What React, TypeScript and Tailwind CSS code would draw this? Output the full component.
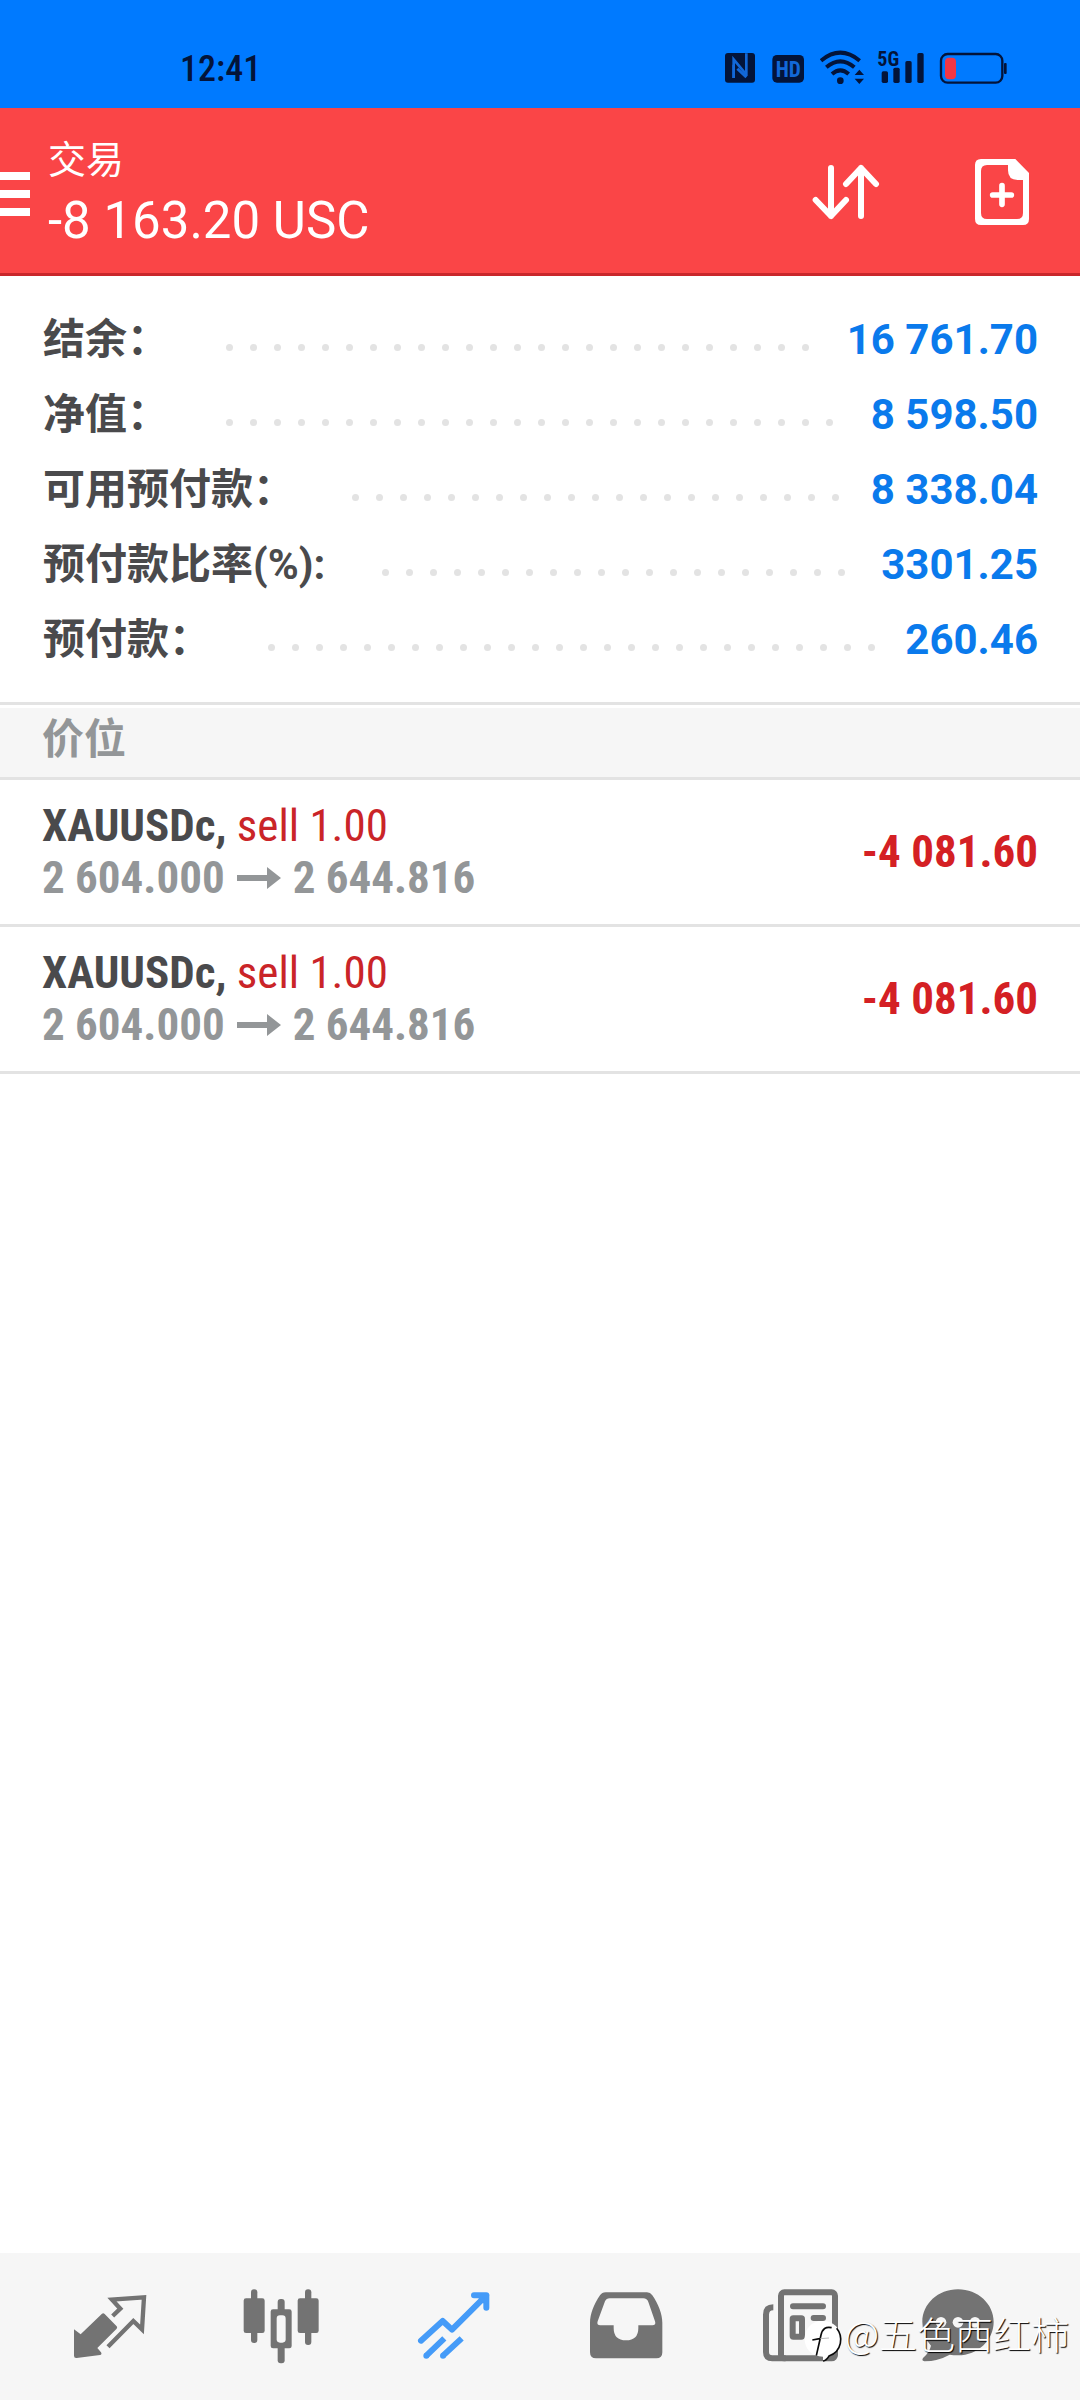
import React from 'react';

const summary = [
  { label: '结余：', value: '16 761.70' },
  { label: '净值：', value: '8 598.50' },
  { label: '可用预付款：', value: '8 338.04' },
  { label: '预付款比率(%):', value: '3301.25' },
  { label: '预付款：', value: '260.46' },
];

const positions = [
  { id: 1, symbol: 'XAUUSDc,', side: 'sell 1.00', open: '2 604.000', current: '2 644.816', profit: '-4 081.60' },
  { id: 2, symbol: 'XAUUSDc,', side: 'sell 1.00', open: '2 604.000', current: '2 644.816', profit: '-4 081.60' },
];

const StatusBar: React.FC = () => (
  <div className="flex h-[108px] items-center justify-between bg-[#007aff] pt-7 pr-[72px] pl-[180px] text-[#03143a]">
    <span className="pt-0.5 font-['Roboto_Condensed','Roboto',sans-serif] text-[36px] leading-10 font-medium">12:41</span>
    <div className="flex items-center gap-3">
      {/* NFC */}
      <svg className="h-9 w-9" viewBox="72 60 108 108">
        <rect x="75" y="69" width="90" height="89" rx="9" fill="currentColor" />
        <path d="M101 144V88l38 46M139 70v68" fill="none" stroke="#1268d8" strokeWidth="8" />
        <path d="M101 144v-40M112 116l27 26" fill="none" stroke="#1268d8" strokeWidth="8" />
      </svg>
      {/* HD voice */}
      <svg className="h-9 w-9" viewBox="216 60 108 108" fill="currentColor">
        <rect x="217" y="75" width="95" height="83" rx="14" />
        <text x="265" y="140" textAnchor="middle" fontSize="64" fill="#1268d8" className="font-['Roboto_Condensed','Roboto',sans-serif] font-bold">HD</text>
      </svg>
      {/* Wi-Fi */}
      <svg className="h-9 w-11" viewBox="360 60 132 108" fill="none" stroke="currentColor" strokeWidth="12">
        <path d="M363 92Q421 44 479 92" />
        <path d="M379 112Q421 76 463 112" />
        <path d="M396 132Q421 110 446 132" />
        <circle cx="421" cy="152" r="10" fill="currentColor" stroke="none" />
        <path d="M464 135l14-16 14 16zM464 146l14 16 14-16z" fill="currentColor" stroke="none" />
      </svg>
      {/* Signal */}
      <svg className="h-9 w-[50px] overflow-visible" viewBox="528 60 150 108" fill="currentColor">
        <text x="532" y="107" fontSize="60" className="font-['Roboto_Condensed','Roboto',sans-serif] font-bold">5G</text>
        <rect x="545" y="124" width="19" height="35" rx="5" />
        <rect x="580" y="113" width="19" height="46" rx="5" />
        <rect x="616" y="93" width="19" height="66" rx="5" />
        <rect x="652" y="69" width="19" height="90" rx="5" />
      </svg>
      {/* Battery */}
      <svg className="h-9 w-[70px]" viewBox="714 60 210 108">
        <rect x="723" y="72" width="184" height="86" rx="20" fill="none" stroke="currentColor" strokeWidth="7" />
        <rect x="912" y="99" width="8" height="33" rx="3" fill="currentColor" />
        <rect x="735" y="83" width="33" height="65" rx="12" fill="#f23645" />
      </svg>
    </div>
  </div>
);

const Header: React.FC = () => (
  <header className="flex items-center border-b-[3px] border-[#c9272b] bg-[#fa4547] pt-5 pr-[50px] pb-[17px] text-white">
    <button type="button" aria-label="Menu" className="mt-1 mr-[18px] flex w-[30px] flex-col gap-[10px]">
      <span className="h-2 w-full bg-white" />
      <span className="h-2 w-full bg-white" />
      <span className="h-2 w-full bg-white" />
    </button>
    <div className="flex-1">
      <h1 className="font-['Noto_Sans_CJK_SC',sans-serif] text-[38px] leading-[58px]">交易</h1>
      <p className="font-['Roboto',sans-serif] text-[51px] leading-[70px]">-8 163.20 USC</p>
    </div>
    <div className="flex items-center gap-[94px]">
      <button type="button" aria-label="Sort">
        <svg className="h-[70px] w-[68px]" viewBox="156 81 204 210" fill="none" stroke="white" strokeWidth="18" strokeLinecap="round" strokeLinejoin="round">
          <path d="M213 114v144M167 210l46 48 45-48" />
          <path d="M303 258V114M258 162l45-48 45 48" />
        </svg>
      </button>
      <button type="button" aria-label="New order">
        <svg className="h-[70px] w-14" viewBox="642 81 168 210" fill="white">
          <path
            fillRule="evenodd"
            d="M663 87H766L807 129V267q0 18-18 18H663q-18 0-18-18V105q0-18 18-18zM681 105q-18 0-18 18V249q0 18 18 18H771q18 0 18-18V150H773q-29 0-29-29V105z"
          />
          <path d="M726 167v56M698 195h56" stroke="white" strokeWidth="17" strokeLinecap="round" />
        </svg>
      </button>
    </div>
  </header>
);

// Dots wrap onto hidden lines, so only whole ones stay visible.
const Leader: React.FC = () => (
  <span aria-hidden="true" className="mt-4 mr-[10px] ml-[57px] flex h-[7px] flex-1 flex-wrap overflow-hidden">
    {Array.from({ length: 40 }, (_, i) => (
      <span key={i} className="h-[7px] w-6">
        <span className="block h-[7px] w-[7px] rounded-full bg-[#e3e3e3]" />
      </span>
    ))}
  </span>
);

const Summary: React.FC = () => (
  <dl className="pt-[26px] pr-[42px] pb-[25px] pl-[43px]">
    {summary.map((row) => (
      <div key={row.label} className="flex h-[75px] items-center">
        <dt className="font-['Roboto','Noto_Sans_CJK_SC',sans-serif] text-[42px] leading-[50px] font-bold text-[#4a4a4c]">{row.label}</dt>
        <Leader />
        <dd className="font-['Roboto',sans-serif] text-[42px] leading-[50px] font-bold text-[#0a7aec]">{row.value}</dd>
      </div>
    ))}
  </dl>
);

const Positions: React.FC = () => (
  <section>
    <div className="border-t-[3px] border-[#e3e3e3] pt-[3px]">
      <h2 className="border-b-[3px] border-[#e3e3e3] bg-[#f6f6f6] pb-[13px] pl-[42px] font-['Noto_Sans_CJK_SC',sans-serif] text-[42px] leading-[56px] font-bold text-[#939698]">价位</h2>
    </div>
    <ul className="font-['Roboto_Condensed','Roboto',sans-serif] text-[45px] leading-[52px]">
      {positions.map((p) => (
        <li key={p.id} className="flex items-center justify-between border-b-[3px] border-[#e3e3e3] py-5 pr-[42px] pl-[42px]">
          <div>
            <p>
              <span className="font-bold text-[#4a4a4c]">{p.symbol}</span> <span className="text-[#ca2428]">{p.side}</span>
            </p>
            <p className="flex items-center gap-3 font-bold text-[#939698]">
              <span>{p.open}</span>
              <svg className="h-6 w-11" viewBox="0 0 44 24" fill="currentColor">
                <path d="M0 9h30V1l14 11-14 11v-8H0z" />
              </svg>
              <span>{p.current}</span>
            </p>
          </div>
          <span className="font-bold text-[#d42024]">{p.profit}</span>
        </li>
      ))}
    </ul>
  </section>
);

const TabBar: React.FC = () => (
  <nav className="relative mt-auto flex h-[147px] items-center justify-between bg-[#f6f6f6] pr-14 pl-[58px] text-[#737373]">
    <button type="button" aria-label="Quotes">
      <svg className="h-[104px] w-[104px]" viewBox="54 104 312 312" fill="currentColor">
        <path d="M186 220q4-3 8 1l36 37q3 3 0 7l-58 58 11 13q4 7-3 8l-70 9q-8 1-8-7V267l20 15z" />
        <path d="M218 227l23-22-25-27 96-7-6 96-26-25-76 77" fill="none" stroke="currentColor" strokeWidth="13" />
      </svg>
    </button>
    <button type="button" aria-label="Charts">
      <svg className="h-[104px] w-[104px]" viewBox="571 104 312 312" fill="currentColor">
        <rect x="634" y="147" width="19" height="161" rx="9" />
        <rect x="612" y="174" width="63" height="104" rx="7" />
        <rect x="796" y="147" width="19" height="167" rx="9" />
        <rect x="774" y="174" width="63" height="104" rx="7" />
        <rect x="714" y="176" width="21" height="193" rx="9" />
        <rect x="693" y="207" width="63" height="117" rx="7" />
        <rect x="711" y="225" width="27" height="82" rx="10" fill="#f6f6f6" />
      </svg>
    </button>
    <button type="button" aria-label="Trade" className="text-[#459bf8]">
      <svg className="h-[104px] w-[104px]" viewBox="68 104 312 312" fill="none" stroke="currentColor" strokeWidth="18" strokeLinejoin="round">
        <path d="M122 301l65-59 28 26L318 165M281 165h37v37" strokeLinecap="round" />
        <path d="M318 190V165h-25z" fill="currentColor" strokeWidth="10" />
        <path d="M138 346l54-52M188 346l56-52" />
        <g fill="currentColor" stroke="none">
          <circle cx="138" cy="346" r="9" />
          <circle cx="188" cy="346" r="9" />
        </g>
      </svg>
    </button>
    <button type="button" aria-label="History">
      <svg className="h-[104px] w-[104px]" viewBox="586 104 312 312" fill="currentColor">
        <path
          fillRule="evenodd"
          d="M678 156H802q10 0 16 9c18 26 30 56 30 83v88q0 18-18 18H649q-18 0-18-18v-88c0-27 12-57 30-83q6-9 17-9zM690 174q-10 0-14 9l-22 60q-4 12 8 12h40v8q0 37 37 37t37-37v-8h42q12 0 8-12l-20-58q-4-11-15-11z"
        />
      </svg>
    </button>
    <button type="button" aria-label="News">
      <svg className="h-[104px] w-[104px]" viewBox="83 104 312 312" fill="none" stroke="currentColor" strokeWidth="18">
        <rect x="182" y="156" width="162" height="198" rx="10" />
        <path d="M159 201q-22 0-22 22v112q0 19 19 19h40" />
        <path d="M218 198h90M280 233h28" strokeLinecap="round" />
        <rect x="217" y="234" width="28" height="55" rx="2" />
      </svg>
    </button>
    <button type="button" aria-label="Messages">
      <svg className="h-[104px] w-[104px]" viewBox="600 104 312 312" fill="currentColor">
        <path d="M714 147c60 0 107 44 107 98s-47 100-107 100q-14 0-25-2-34 19-76 20-9-2-4-10 20-18 24-37-26-29-26-71c0-54 47-98 107-98z" />
        <g fill="#f6f6f6">
          <circle cx="663" cy="246" r="16" />
          <circle cx="714" cy="246" r="16" />
          <circle cx="765" cy="246" r="16" />
        </g>
      </svg>
    </button>

    {/* Author mark over the tabs */}
    <div className="absolute right-[11px] bottom-[42px] flex items-center gap-px text-white">
      <svg className="h-11 w-10 overflow-visible" viewBox="30 34 120 132">
        <path d="M88 64c34 0 56 23 56 54 0 26-16 46-38 52l-16 14v-13c-33 0-55-23-55-53s20-54 53-54z" fill="white" />
        <path d="M131 86c20 24 17 69-23 83q-7 14-18 15" fill="none" stroke="#0a0a0a" strokeWidth="5" />
        <path d="M116 84q-26-6-32 22l-14 62M58 121l22-4" fill="none" stroke="#0a0a0a" strokeWidth="5" />
        <path d="M82 117l26-2" fill="none" stroke="#bbb" strokeWidth="3" />
      </svg>
      <span className="font-['Noto_Sans_CJK_SC',sans-serif] text-[38px] leading-[50px] font-light [text-shadow:1px_1px_1px_#000]">@五色西红柿</span>
    </div>
  </nav>
);

const App: React.FC = () => {
  return (
    <div className="flex min-h-screen flex-col bg-white">
      <StatusBar />
      <Header />
      <main>
        <Summary />
        <Positions />
      </main>
      <TabBar />
    </div>
  );
};

export default App;
